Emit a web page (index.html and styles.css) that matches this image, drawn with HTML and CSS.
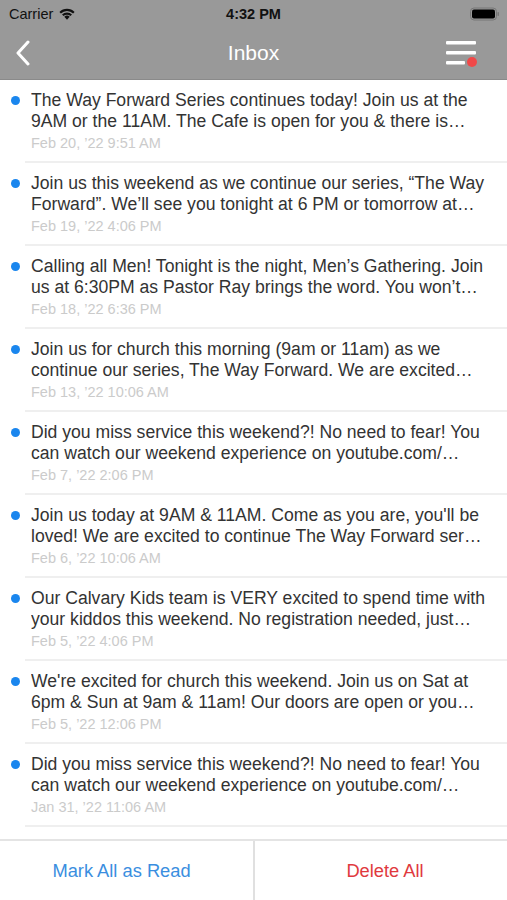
FILE: index.html
```html
<!DOCTYPE html>
<html>
<head>
<meta charset="utf-8">
<link rel="stylesheet" href="styles.css">
</head>
<body>
<div class="app">
  <header class="header">
    <div class="status">
      <div class="status-left">Carrier
        <svg class="wifi" width="18" height="13" viewBox="0 0 16 12"><path d="M8 11.8 L5.5 9.1 A3.5 3.5 0 0 1 10.5 9.1 Z" fill="#111"/><path d="M3.4 7 A6.4 6.4 0 0 1 12.6 7 L11.2 8.4 A4.5 4.5 0 0 0 4.8 8.4 Z" fill="#111"/><path d="M1 4.6 A9.8 9.8 0 0 1 15 4.6 L13.6 6 A7.8 7.8 0 0 0 2.4 6 Z" fill="#111"/></svg>
      </div>
      <div class="status-time">4:32 PM</div>
      <div class="status-right">
        <svg width="30" height="14" viewBox="0 0 30 14"><rect x="0.5" y="1" width="26" height="12" rx="3.5" fill="none" stroke="#777" stroke-width="1"/><rect x="2" y="2.5" width="23" height="9" rx="2" fill="#000"/><rect x="27.5" y="5" width="1.5" height="4" rx="0.7" fill="#777"/></svg>
      </div>
    </div>
    <div class="nav">
      <svg class="back" width="20" height="26" viewBox="0 0 20 26"><path d="M14 2 L4 13 L14 24" fill="none" stroke="#fff" stroke-width="3" stroke-linecap="round" stroke-linejoin="round"/></svg>
      <div class="title">Inbox</div>
      <svg class="menu" width="40" height="30" viewBox="0 0 40 30"><rect x="2" y="2" width="30" height="3.5" rx="1" fill="#fff"/><rect x="2" y="12" width="30" height="3.5" rx="1" fill="#fff"/><rect x="2" y="22" width="19" height="3.5" rx="1" fill="#fff"/><circle cx="28" cy="23" r="5" fill="#f04848"/></svg>
    </div>
  </header>
  <main class="list">
    <div class="item"><span class="dot"></span><div class="body"><div class="msg">The Way Forward Series continues today! Join us at the 9AM or the 11AM. The Cafe is open for you &amp; there is…</div><div class="date">Feb 20, ’22 9:51 AM</div></div></div>
    <div class="item"><span class="dot"></span><div class="body"><div class="msg">Join us this weekend as we continue our series, “The Way Forward”. We’ll see you tonight at 6 PM or tomorrow at…</div><div class="date">Feb 19, ’22 4:06 PM</div></div></div>
    <div class="item"><span class="dot"></span><div class="body"><div class="msg">Calling all Men! Tonight is the night, Men’s Gathering. Join us at 6:30PM as Pastor Ray brings the word. You won’t…</div><div class="date">Feb 18, ’22 6:36 PM</div></div></div>
    <div class="item"><span class="dot"></span><div class="body"><div class="msg">Join us for church this morning (9am or 11am) as we continue our series, The Way Forward. We are excited…</div><div class="date">Feb 13, ’22 10:06 AM</div></div></div>
    <div class="item"><span class="dot"></span><div class="body"><div class="msg">Did you miss service this weekend?! No need to fear! You can watch our weekend experience on youtube.com/…</div><div class="date">Feb 7, ’22 2:06 PM</div></div></div>
    <div class="item"><span class="dot"></span><div class="body"><div class="msg">Join us today at 9AM &amp; 11AM. Come as you are, you'll be loved! We are excited to continue The Way Forward ser…</div><div class="date">Feb 6, ’22 10:06 AM</div></div></div>
    <div class="item"><span class="dot"></span><div class="body"><div class="msg">Our Calvary Kids team is VERY excited to spend time with your kiddos this weekend. No registration needed, just…</div><div class="date">Feb 5, ’22 4:06 PM</div></div></div>
    <div class="item"><span class="dot"></span><div class="body"><div class="msg">We're excited for church this weekend. Join us on Sat at 6pm &amp; Sun at 9am &amp; 11am! Our doors are open or you…</div><div class="date">Feb 5, ’22 12:06 PM</div></div></div>
    <div class="item"><span class="dot"></span><div class="body"><div class="msg">Did you miss service this weekend?! No need to fear! You can watch our weekend experience on youtube.com/…</div><div class="date">Jan 31, ’22 11:06 AM</div></div></div>
  </main>
  <footer class="footer">
    <div class="btn btn-read">Mark All as Read</div>
    <div class="btn btn-delete">Delete All</div>
  </footer>
</div>
</body>
</html>
```
FILE: styles.css
```css
* { box-sizing: border-box; }
html, body { margin: 0; padding: 0; }
body {
  font-family: "Liberation Sans", Arial, sans-serif;
  background: #fff;
}
.app {
  width: 507px;
  height: 900px;
  display: flex;
  flex-direction: column;
  overflow: hidden;
}
.header {
  background: #999999;
  border-bottom: 1px solid #8a8a8a;
}
.status {
  height: 27px;
  display: flex;
  align-items: center;
  justify-content: space-between;
  padding: 0 7px 0 9px;
  position: relative;
  font-size: 14.5px;
  color: #111;
}
.status-left { display: flex; align-items: center; gap: 5px; }
.status-time {
  position: absolute;
  left: 0; right: 0;
  text-align: center;
  font-weight: bold;
  font-size: 14.5px;
}
.status-right { display: flex; align-items: center; }
.nav {
  height: 52px;
  display: flex;
  align-items: center;
  justify-content: space-between;
  padding: 0 23px 0 14px;
  position: relative;
}
.title {
  position: absolute;
  left: 0; right: 0;
  text-align: center;
  color: #fff;
  font-size: 21px;
}
.back, .menu { position: relative; z-index: 1; }
.back { margin-top: -1px; }
.menu { margin-top: 2px; }
.list {
  flex: 1;
  overflow: hidden;
}
.item {
  display: flex;
  padding: 10px 16px 11px 0;
  background: linear-gradient(#efefef, #efefef) 25px 100% / 100% 2px no-repeat;
}
.dot {
  flex: none;
  width: 9px;
  height: 9px;
  border-radius: 50%;
  background: #1a86ee;
  margin: 6px 11px 0 11px;
}
.body { flex: 1; min-width: 0; }
.msg {
  font-size: 17.6px;
  line-height: 21px;
  height: 42px;
  color: #333;
  overflow: hidden;
}
.date {
  font-size: 14.5px;
  line-height: 17px;
  color: #cbcbcb;
  margin-top: 3px;
  white-space: nowrap;
}
.footer {
  height: 61px;
  flex: none;
  display: flex;
  border-top: 2px solid #e4e4e4;
}
.btn {
  flex: 1;
  display: flex;
  align-items: center;
  justify-content: center;
  font-size: 18.3px;
}
.btn-read { color: #3a8ee0; border-right: 2px solid #e0e0e0; flex: 0 0 255px; padding-right: 10px; }
.btn-delete { color: #e0393e; padding-left: 8px; }
```
